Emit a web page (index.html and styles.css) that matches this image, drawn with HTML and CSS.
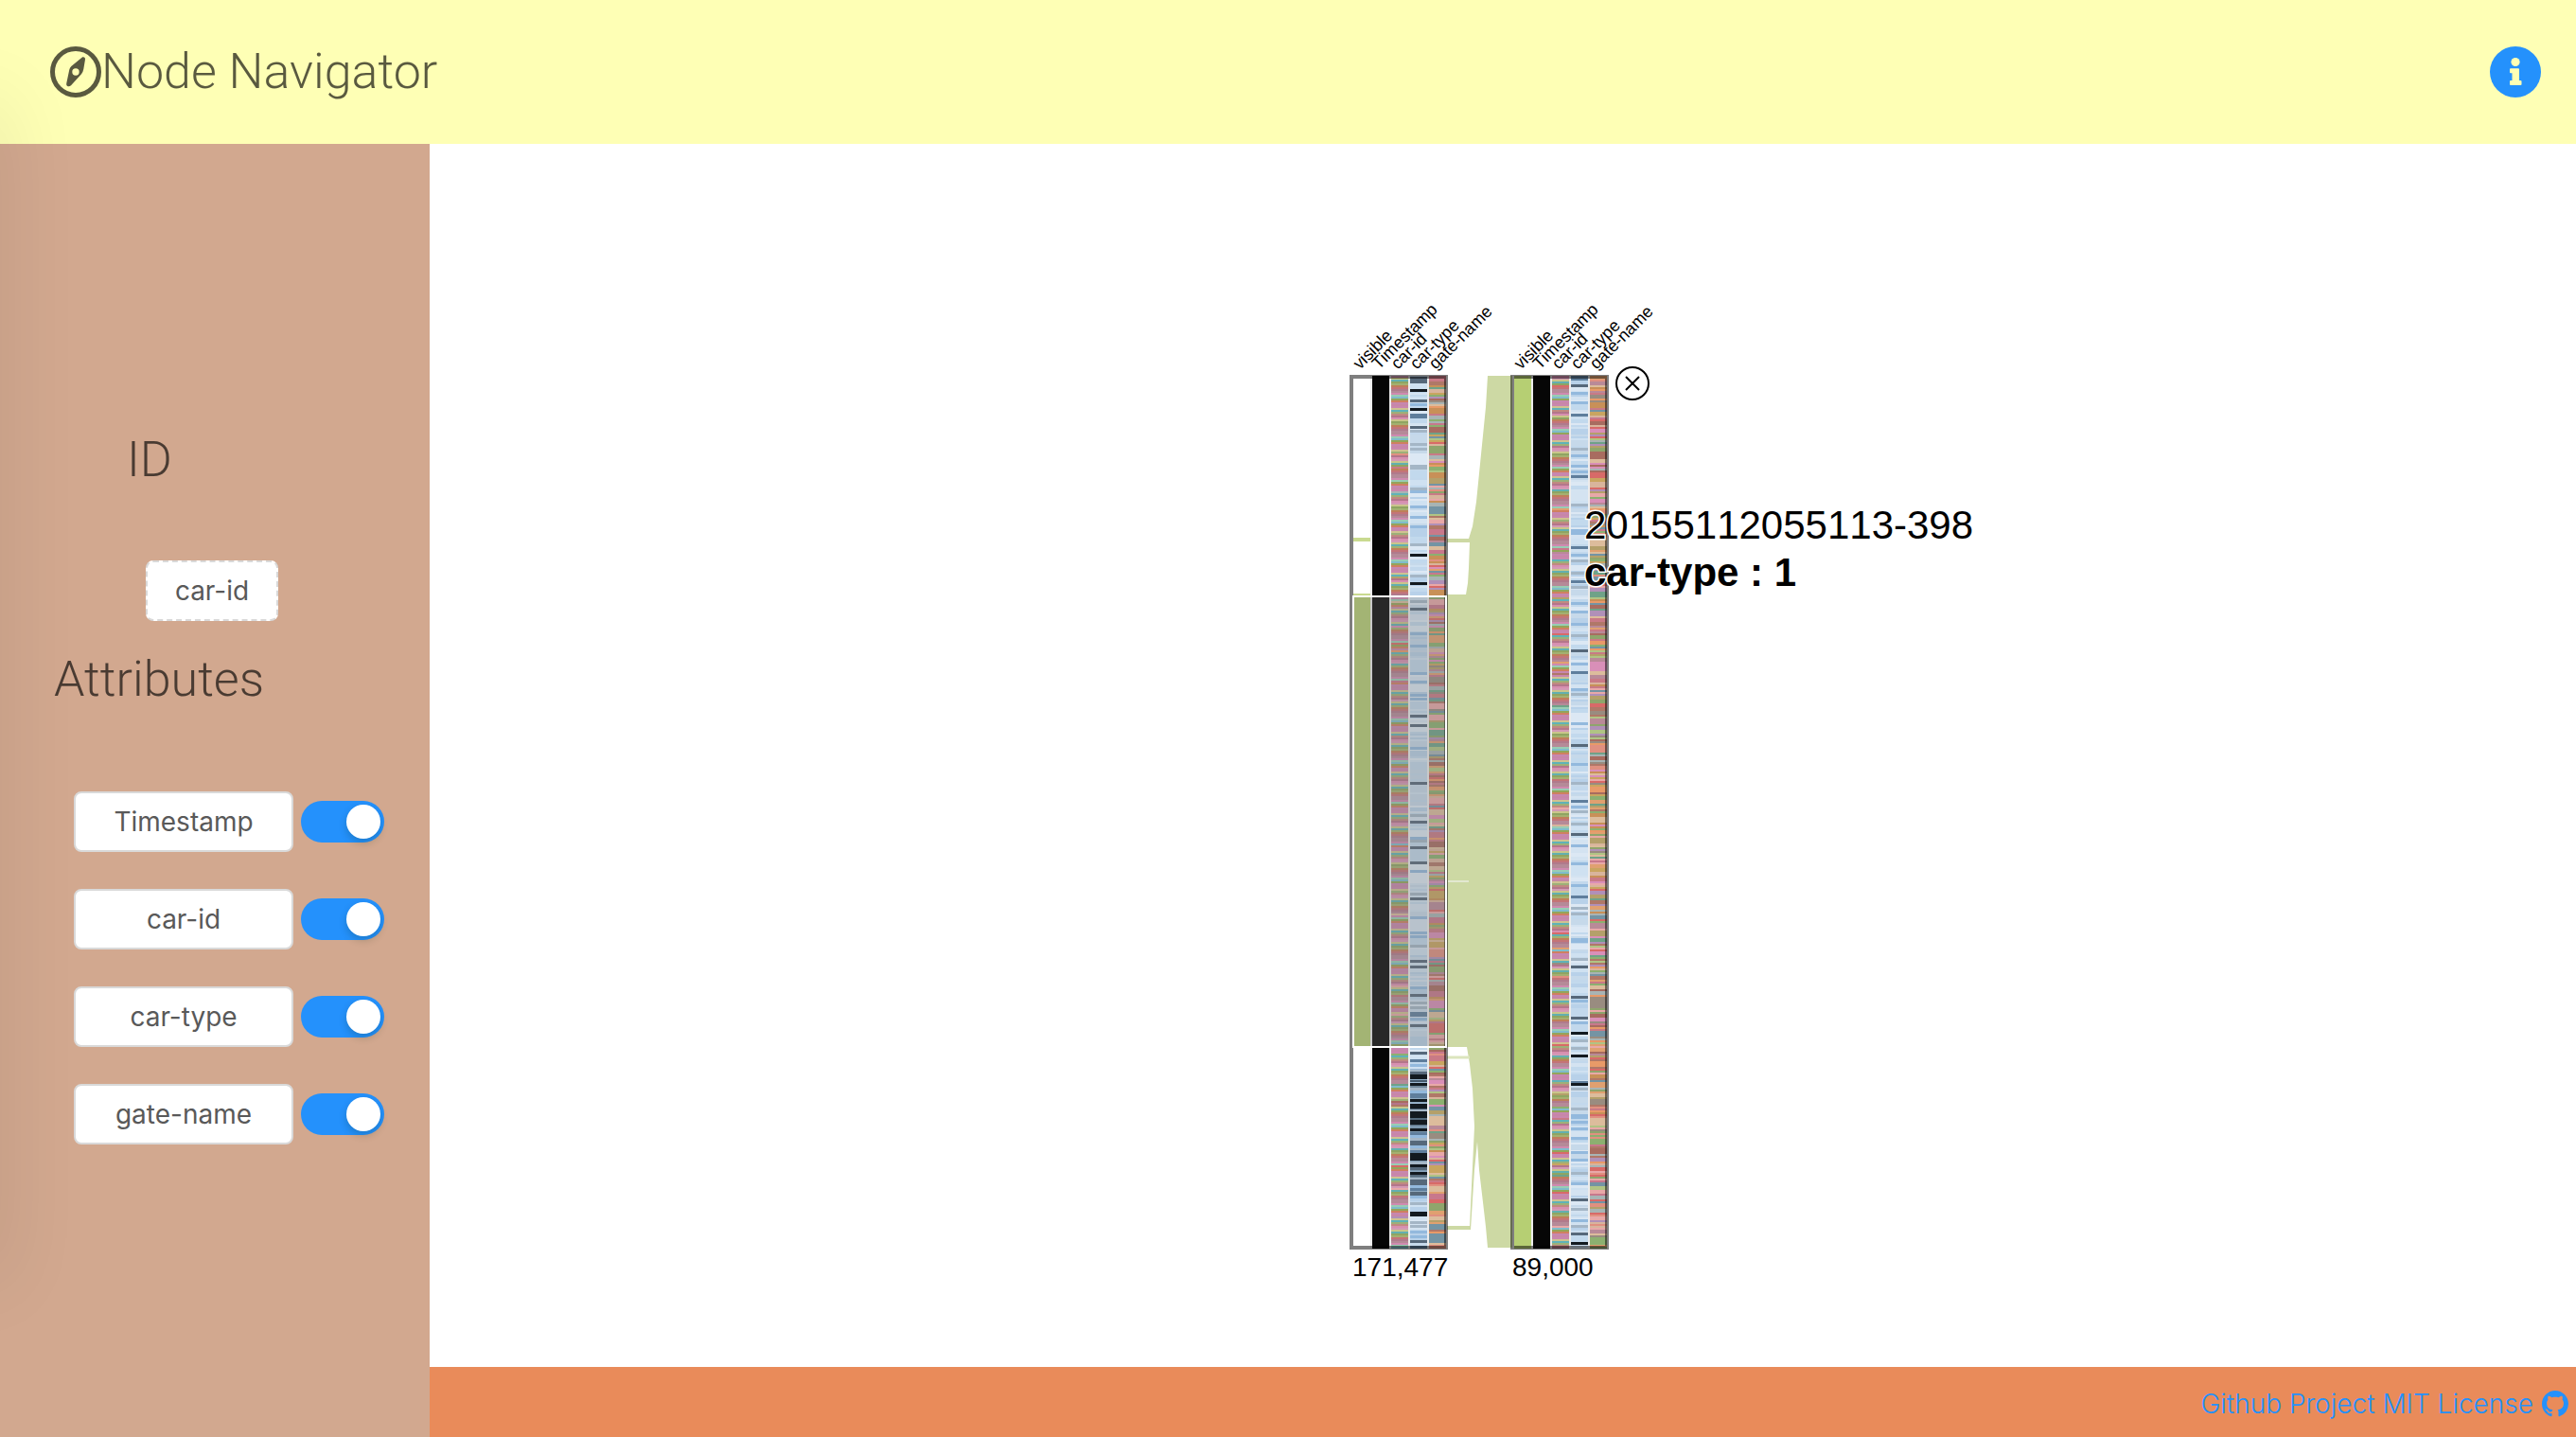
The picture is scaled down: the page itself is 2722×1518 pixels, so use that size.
FILE: index.html
```html
<!DOCTYPE html>
<html lang="en">
<head>
<meta charset="utf-8">
<title>Node Navigator</title>
<link rel="stylesheet" href="styles.css">
</head>
<body>
<div class="app">
  <header class="header">
    <h1 class="brand">
      <svg class="brand-icon" viewBox="0 0 54 54" aria-hidden="true">
        <circle cx="27" cy="27" r="24.5" fill="none" stroke="currentColor" stroke-width="5"/>
        <path fill="currentColor" fill-rule="evenodd" d="M34.200 11.300Q37.200 10.800 37 13.800L35.300 24Q34.900 26.600 33 29.200L22 41.300Q20.300 42.700 18.300 42Q16.800 41.300 17.200 39.200L20.300 24.500Q20.700 22.600 22.300 21ZM27 23.300a3.700 3.700 0 1 0 0 7.400a3.700 3.700 0 1 0 0-7.400Z"/>
      </svg>
      <span>Node Navigator</span>
    </h1>
    <button class="info" type="button" aria-label="Information">
      <svg viewBox="0 0 54 54" aria-hidden="true">
        <circle cx="27" cy="27" r="27" fill="#2491fc"/>
        <circle cx="27" cy="16.500" r="4.600" fill="#feffb5"/>
        <path fill="#feffb5" d="M22 23.300h8q1 0 1 1V36h1.500q1 0 1 1v3q0 1-1 1H22q-1 0-1-1v-3q0-1 1-1h1.500v-7.700H22q-1 0-1-1v-3q0-1 1-1Z"/>
      </svg>
    </button>
  </header>

  <aside class="sidebar">
    <h2 class="heading heading-id">ID</h2>
    <button class="tag tag-id" type="button">car-id</button>
    <h2 class="heading heading-attributes">Attributes</h2>
    <ul class="attributes">
      <li class="attribute"><label class="tag" for="sw-timestamp">Timestamp</label><input class="switch" id="sw-timestamp" type="checkbox" checked></li>
      <li class="attribute"><label class="tag" for="sw-car-id">car-id</label><input class="switch" id="sw-car-id" type="checkbox" checked></li>
      <li class="attribute"><label class="tag" for="sw-car-type">car-type</label><input class="switch" id="sw-car-type" type="checkbox" checked></li>
      <li class="attribute"><label class="tag" for="sw-gate-name">gate-name</label><input class="switch" id="sw-gate-name" type="checkbox" checked></li>
    </ul>
  </aside>

  <main class="main">
    <svg class="chart" viewBox="454 152 2268 1292" role="img" aria-label="Node navigator columns">
      <path class="flow" d="M1598 397H1572L1570 430L1566 470L1560 530L1556 556L1552 569H1529V573H1553L1552 600L1551 616L1549 628H1529V1106H1550L1553 1124L1556 1150L1558 1190L1553 1295H1529V1299H1554L1558 1236L1561 1206L1563 1236L1567 1270L1570 1296L1572 1318H1598Z"/>
      <path class="flow-line" d="M1529 1117H1553"/>
      <path class="flow-gap" d="M1530 931H1552"/>
      <g id="left-node"></g>
      <g id="right-node"></g>
      <rect class="brush" x="1430" y="630" width="98" height="476"/>
      <g class="close">
        <circle cx="1725" cy="405" r="17"/>
        <path d="M1718 398l14 14M1732 398l-14 14"/>
      </g>
      <text class="count" x="1429" y="1348">171,477</text>
      <text class="count" x="1598" y="1348">89,000</text>
      <text class="tip" x="1674" y="569">20155112055113-398</text>
      <text class="tip tip-bold" x="1674" y="619">car-type : 1</text>
    </svg>
  </main>

  <footer class="footer">
    <a class="footer-link" href="#license">Github Project MIT License
      <svg class="github" viewBox="0 0 16 16" aria-hidden="true"><path fill="currentColor" d="M8 0C3.580 0 0 3.580 0 8c0 3.540 2.290 6.530 5.470 7.590.4.070.55-.17.55-.38 0-.19-.01-.82-.01-1.490-2.010.37-2.530-.49-2.690-.94-.09-.23-.48-.94-.82-1.130-.28-.15-.68-.52-.01-.53.63-.01 1.080.58 1.230.82.72 1.210 1.870.87 2.330.66.070-.52.28-.87.51-1.070-1.780-.2-3.640-.89-3.640-3.950 0-.87.31-1.590.82-2.150-.08-.2-.36-1.020.08-2.120 0 0 .67-.21 2.200.82.64-.18 1.320-.27 2-.27s1.360.09 2 .27c1.530-1.040 2.200-.82 2.200-.82.44 1.100.16 1.920.08 2.120.51.56.82 1.270.82 2.150 0 3.070-1.870 3.750-3.650 3.950.29.25.54.73.54 1.480 0 1.070-.01 1.930-.01 2.200 0 .21.15.46.55.38A8.010 8.010 0 0 0 16 8c0-4.420-3.580-8-8-8z"/></svg>
    </a>
  </footer>
</div>
<div class="drawer" aria-hidden="true"></div>
<script src="chart.js"></script>
</body>
</html>
```
FILE: styles.css
```css
* { box-sizing: border-box; }

body {
  margin: 0;
  font-family: Inter, "Liberation Sans", sans-serif;
  font-size: 28px;
  color: rgba(0, 0, 0, 0.65);
  background: #fff;
}

.app {
  display: grid;
  grid-template-columns: 454px minmax(0, 1fr);
  grid-template-rows: 152px minmax(0, 1fr) 74px;
  height: 100vh;
}

.header {
  grid-column: 1 / -1;
  display: flex;
  align-items: center;
  justify-content: space-between;
  padding: 0 37px 0 53px;
  background: #feffb5;
}

.brand,
.heading {
  margin: 0;
  font-family: Roboto, Inter, sans-serif;
  font-size: 52px;
  font-weight: 300;
  line-height: 64px;
}

.brand {
  display: flex;
  align-items: center;
}

.brand-icon,
.info svg {
  display: block;
  width: 54px;
  height: 54px;
}

.info {
  padding: 0;
  border: 0;
  background: none;
}

.sidebar {
  grid-row: 2 / -1;
  display: flex;
  flex-direction: column;
  padding-top: 302px;
  background: #d2a88f;
}

.heading-id { padding-left: 134px; }
.heading-attributes { padding-left: 57px; margin-top: 30px; }

.tag {
  display: flex;
  align-items: center;
  justify-content: center;
  width: 232px;
  height: 64px;
  border: 2px solid #d9d9d9;
  border-radius: 8px;
  background: #fff;
  color: #595959;
  font: inherit;
}

.tag-id {
  width: 140px;
  margin: 74px 0 0 154px;
  border-style: dashed;
  padding: 0;
}

.attributes {
  display: flex;
  flex-direction: column;
  gap: 39px;
  margin: 86px 0 0;
  padding: 0 0 0 78px;
  list-style: none;
}

.attribute {
  display: flex;
  align-items: center;
  gap: 8px;
}

.switch {
  appearance: none;
  display: flex;
  justify-content: flex-end;
  width: 88px;
  height: 44px;
  margin: 0;
  padding: 4px;
  border-radius: 22px;
  background: #2491fc;
}

.switch::before {
  content: "";
  width: 36px;
  height: 36px;
  border-radius: 50%;
  background: #fff;
  box-shadow: 0 4px 8px rgba(0, 35, 11, 0.2);
}

.main { min-height: 0; }

.chart {
  display: block;
  width: 100%;
  height: 100%;
  font-family: "Liberation Sans", Arial, sans-serif;
  font-kerning: none;
}

.flow { fill: #cdd9a4; }
.flow-line { stroke: #dbe5bd; stroke-width: 3; }
.flow-gap { stroke: #e3e8d0; stroke-width: 2; }
.frame { fill: none; stroke: #000; stroke-opacity: 0.5; stroke-width: 4; }
.label { font-size: 18px; fill: #000; }
.count { font-size: 28px; fill: #000; }
.brush { fill: #777; fill-opacity: 0.3; stroke: #fff; stroke-width: 2; }
.close { fill: none; stroke: #000; stroke-width: 2; }

.tip {
  font-size: 42px;
  fill: #000;
  stroke: #fff;
  stroke-width: 3;
  paint-order: stroke;
}

.tip-bold { font-weight: 700; }

.footer {
  display: flex;
  align-items: center;
  justify-content: flex-end;
  padding: 4px 8px 0 0;
  background: #e98b5a;
}

.footer-link {
  display: flex;
  align-items: center;
  gap: 9px;
  color: #2491fc;
  font-weight: 300;
  text-decoration: none;
}

.github { width: 28px; height: 28px; }

/* Closed drawer: only its shadow reaches the window. */
.drawer {
  position: fixed;
  top: 120px;
  bottom: 180px;
  left: -40px;
  width: 32px;
  box-shadow: 0 0 80px 16px rgba(0, 0, 0, 0.08);
  pointer-events: none;
}
```
FILE: chart.js
```js
const NS = 'http://www.w3.org/2000/svg';
const TOP = 397, BOTTOM = 1319, STEP = 2;
const COLUMNS = ['visible', 'Timestamp', 'car-id', 'car-type', 'gate-name'];

let seed = 7;
function random() {
  seed = (seed * 16807) % 2147483647;
  return seed / 2147483647;
}

function add(parent, name, attrs, text) {
  const el = document.createElementNS(NS, name);
  for (const key in attrs) el.setAttribute(key, attrs[key]);
  if (text) el.textContent = text;
  parent.appendChild(el);
  return el;
}

const ID_CYCLE = [
  '#b4768b', '#d78fb0', '#d39ab5', '#c9c58a', '#62b0b0', '#8fa562', '#a4b070', '#bf7f5a',
  '#c47478', '#b07a8c', '#b58a98', '#b58a98', '#cf8ab0', '#98cdb4', '#7fbccb', '#94a55a',
  '#cf8060', '#c787b0', '#c787a8', '#c987ae', '#cfc290', '#5fb3b8', '#9db078', '#c08a80'
];
const GATE = [
  '#c97a86', '#b07868', '#d98fb8', '#e09080', '#c9a560', '#8fa56c', '#b98a98', '#d8b49c',
  '#6fa288', '#e89a68', '#b090b8', '#b0c484', '#998c80', '#d86a68', '#e8a8a8', '#c89058',
  '#a8b4b4', '#b4a06a', '#c8788c', '#dcbc9c', '#7494a4', '#a86c60', '#8cb070', '#e0a070'
];
const TYPE = ['#dce8f4', '#cfe1f1', '#c2d9ed', '#d4e3f1', '#b8d1e9', '#c6d9ea', '#c2d8ec'];
const DARK_TYPE = ['#8ea9c0', '#9fbbd4', '#6f8698', '#556a7c', '#7c97ae', '#465a6c'];
const TONE = { g: '#a4b6c6', b: '#93b9dd', d: '#56687a', k: '#131a20', n: '#5f7e9c' };

/* Marks of the car-type column: tone letter, then the y of each mark. */
const LEFT_MARKS = {
  g: [455, 469, 474, 492, 494, 516, 575, 608, 635, 861, 888, 944, 999, 1059, 1064, 1131, 1150, 1173, 1203, 1214, 1228, 1245, 1271, 1291, 1295],
  b: [427, 519, 535, 546, 556, 669, 682, 711, 720, 734, 738, 790, 885, 920, 969, 985, 989, 1043, 1076, 1125, 1153, 1200, 1211, 1253, 1264, 1301, 1306],
  d: [399, 401, 403, 423, 451, 643, 756, 766, 827, 868, 895, 911, 949, 1015, 1021, 1051, 1083, 1112, 1133, 1206, 1208, 1234, 1247, 1250, 1260, 1311],
  n: [438, 440, 1070, 1072, 1120, 1156, 1158, 1197, 1216, 1256, 1317],
  k: [412, 432, 586, 616, 1136, 1138, 1145, 1162, 1167, 1169, 1175, 1177, 1179, 1184, 1186, 1193, 1219, 1221, 1224, 1231, 1239, 1281, 1283]
};
const RIGHT_MARKS = {
  g: [474, 533, 592, 605, 620, 671, 733, 827, 857, 870, 959, 965, 1013, 1099, 1107, 1150, 1171, 1239, 1277, 1295],
  b: [415, 425, 481, 492, 498, 560, 563, 586, 637, 646, 659, 701, 728, 764, 807, 852, 893, 912, 935, 992, 994, 1057, 1080, 1178, 1180, 1185, 1192, 1202, 1217, 1225, 1250, 1289],
  d: [407, 687, 787, 881, 1021, 1053, 1075, 1267, 1303],
  n: [398, 400, 438, 503, 578, 614, 710, 846, 947, 1143],
  k: [1091, 1115, 1145, 1313]
};

function pick(list) {
  return list[Math.floor(random() * list.length)];
}

function stripe(group, x, y, fill, height) {
  add(group, 'rect', { x, y, width: 18, height: height || STEP, fill });
}

function drawNode(id, x, marks, visible) {
  const group = document.getElementById(id);
  const height = BOTTOM - TOP;
  add(group, 'rect', { x, y: TOP, width: 98, height, fill: '#ececec' });
  add(group, 'rect', { x, y: TOP, width: 18, height, fill: visible ? '#b6cf73' : '#fff' });
  if (!visible) {
    stripe(group, x, 568, '#c9da90', 4);
    stripe(group, x, 627, '#c9da90', 3);
    stripe(group, x, 630, '#b6cf73', 476);
  }
  add(group, 'rect', { x: x + 20, y: TOP, width: 18, height, fill: '#060606' });

  let phase = 0, gate = GATE[0], type = TYPE[0];
  for (let y = TOP; y < BOTTOM; y += STEP) {
    phase = (phase + (random() < 0.12 ? 2 : 1)) % ID_CYCLE.length;
    stripe(group, x + 40, y, random() < 0.04 ? pick(GATE) : ID_CYCLE[phase]);
    const dark = !visible && y > 1128 && y < 1262;
    if (dark || random() < 0.6) type = pick(dark ? DARK_TYPE : TYPE);
    stripe(group, x + 60, y, type);
    if (random() < 0.72) gate = pick(GATE);
    stripe(group, x + 80, y, gate);
  }
  for (const tone in marks) {
    for (const y of marks[tone]) stripe(group, x + 60, y - 1, TONE[tone], 3);
  }
  add(group, 'rect', { class: 'frame', x: x - 2, y: 398, width: 100, height: 920 });
  COLUMNS.forEach((name, i) => {
    const lx = x + 7 + i * 20;
    add(group, 'text', { class: 'label', x: lx, y: 391, transform: `rotate(-45 ${lx} 391)` }, name);
  });
}

drawNode('left-node', 1430, LEFT_MARKS, false);
drawNode('right-node', 1600, RIGHT_MARKS, true);
```
